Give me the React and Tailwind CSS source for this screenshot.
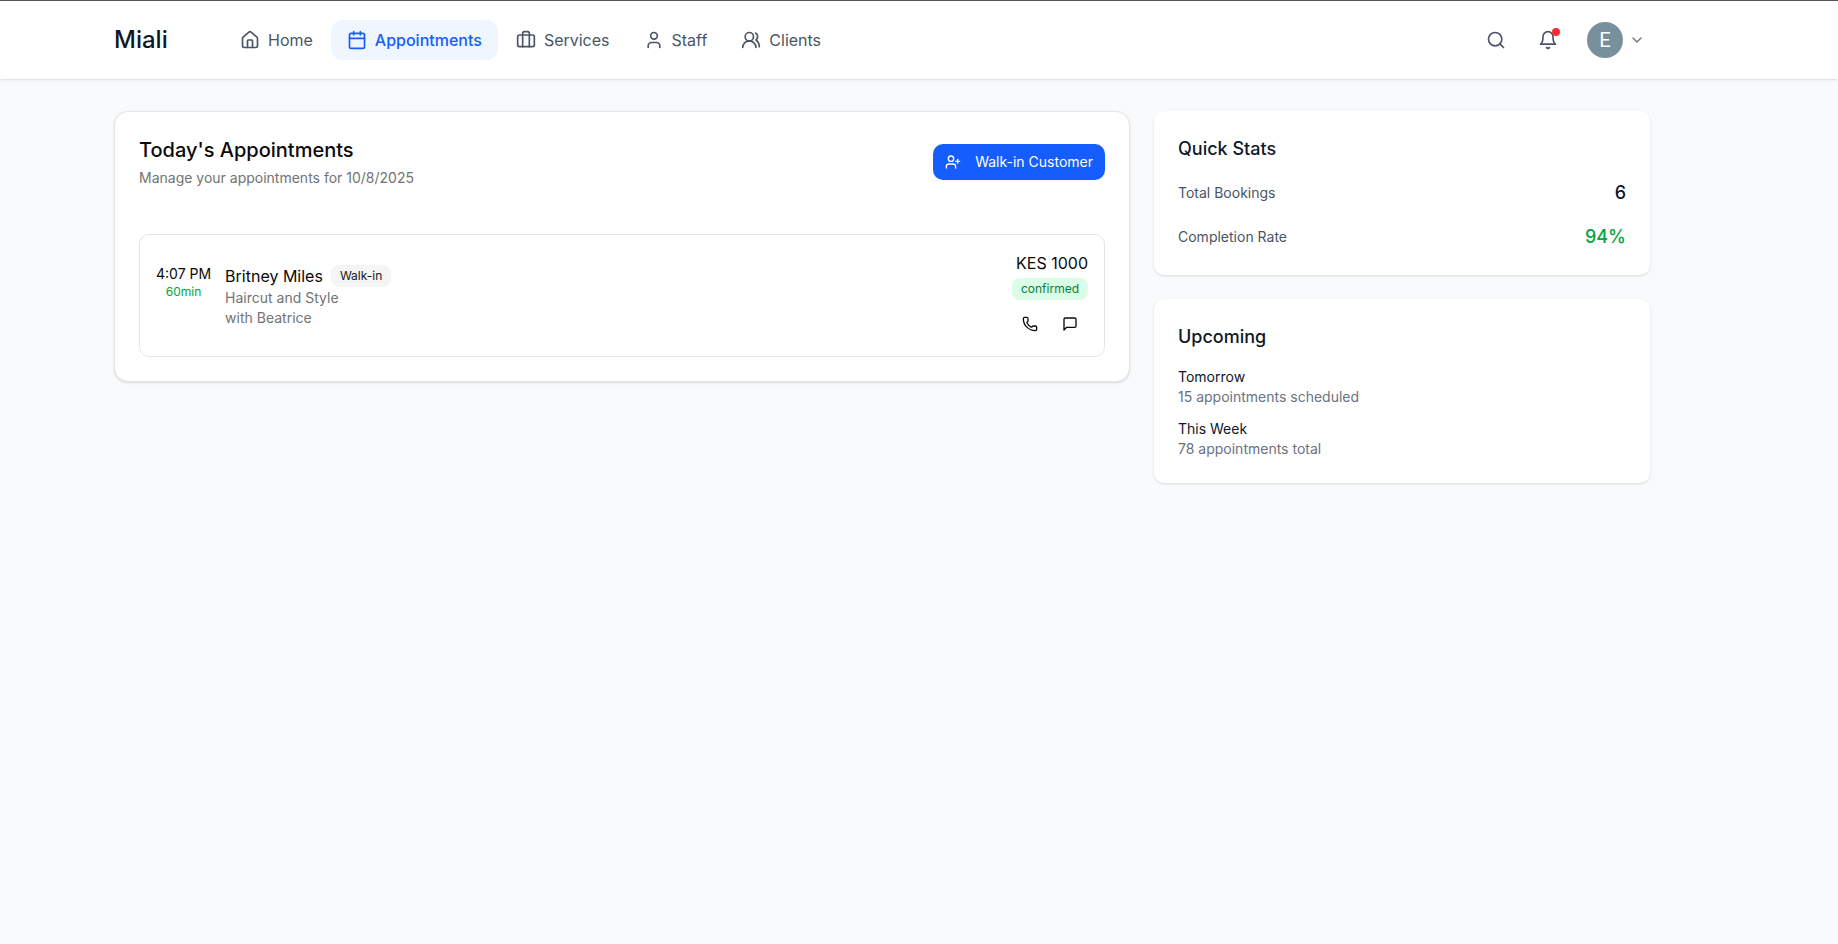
import React from 'react';
import {
    Briefcase,
    Calendar,
    ChevronDown,
    House,
    Phone,
    Search,
    User,
    UserPlus,
    UsersRound,
} from 'lucide-react';

const BellIcon = ({ className }) => (
    <svg className={className} viewBox="0 0 24 24" fill="none" stroke="currentColor" strokeWidth="2" strokeLinecap="round" strokeLinejoin="round">
        <path d="M6 8a6 6 0 0 1 12 0c0 7 3 9 3 9H3s3-2 3-9" />
        <path d="M10.3 21a1.94 1.94 0 0 0 3.4 0" />
    </svg>
);

const MessageIcon = ({ className }) => (
    <svg className={className} viewBox="0 0 24 24" fill="none" stroke="currentColor" strokeWidth="2" strokeLinecap="round" strokeLinejoin="round">
        <path d="M21 15a2 2 0 0 1-2 2H7l-4 4V5a2 2 0 0 1 2-2h14a2 2 0 0 1 2 2z" />
    </svg>
);

const navItems = [
    { label: 'Home', icon: House },
    { label: 'Appointments', icon: Calendar, active: true },
    { label: 'Services', icon: Briefcase },
    { label: 'Staff', icon: User },
    { label: 'Clients', icon: UsersRound },
];

const Header = () => {
    return (
        <header className="bg-white border-t border-[#555555] shadow-sm">
            <div className="flex items-center h-[78px] max-w-[1650px] pl-[114px]">
                <a href="#" className="text-2xl font-medium text-gray-900 w-[110px]">Miali</a>
                <nav className="flex items-center gap-0.5">
                    {navItems.map(({ label, icon: Icon, active }) => (
                        <a
                            key={label}
                            href="#"
                            className={`flex items-center gap-2 px-4 py-2 rounded-xl ${active ? 'bg-blue-50 text-blue-600 font-medium' : 'text-gray-600 hover:text-gray-900'}`}
                        >
                            <Icon className="w-5 h-5" />
                            <span>{label}</span>
                        </a>
                    ))}
                </nav>
                <div className="flex items-center gap-4 ml-auto">
                    <button aria-label="Search" className="p-2 text-gray-600">
                        <Search className="w-5 h-5" />
                    </button>
                    <button aria-label="Notifications" className="relative p-2 text-gray-600">
                        <BellIcon className="w-5 h-5" />
                        <span className="absolute top-1.5 right-1.5 w-2 h-2 bg-[#fb2c36] rounded-full"></span>
                    </button>
                    <button aria-label="Account" className="flex items-center gap-1.5 px-[5px] py-1">
                        <span className="flex items-center justify-center w-9 h-9 rounded-full bg-[#78909c] text-white text-xl font-['Roboto',sans-serif]">E</span>
                        <ChevronDown className="w-4 h-4 text-gray-500" />
                    </button>
                </div>
            </div>
        </header>
    );
};

const AppointmentRow = ({ time, duration, name, service, staff, price, status }) => {
    return (
        <div className="flex items-center justify-between p-4 border border-neutral-200 rounded-[10px]">
            <div className="flex items-start gap-[14px]">
                <div className="text-center">
                    <p className="text-sm">{time}</p>
                    <p className="text-xs text-[#00a63e]">{duration}</p>
                </div>
                <div>
                    <div className="flex items-center gap-2">
                        <h3>{name}</h3>
                        <span className="px-2 py-0.5 border border-transparent rounded-lg bg-neutral-100 text-xs text-neutral-900">Walk-in</span>
                    </div>
                    <p className="text-sm text-neutral-500">{service}</p>
                    <p className="text-sm text-neutral-500">with {staff}</p>
                </div>
            </div>
            <div className="flex flex-col items-end">
                <p>{price}</p>
                <span className="mt-[3px] px-2 py-0.5 border border-transparent rounded-lg bg-green-100 text-xs text-green-700">{status}</span>
                <div className="flex gap-1 mt-2">
                    <button aria-label="Call" className="flex items-center justify-center w-9 h-8">
                        <Phone className="w-4 h-4" />
                    </button>
                    <button aria-label="Message" className="flex items-center justify-center w-9 h-8">
                        <MessageIcon className="w-4 h-4" />
                    </button>
                </div>
            </div>
        </div>
    );
};

const TodaysAppointments = () => {
    return (
        <section className="col-span-2 self-start bg-white border border-neutral-200 rounded-[14px] shadow-sm p-6">
            <div className="flex items-center justify-between mb-[46px]">
                <div>
                    <h2 className="text-xl font-medium">Today's Appointments</h2>
                    <p className="mt-1 text-sm text-neutral-500">Manage your appointments for 10/8/2025</p>
                </div>
                <button className="flex items-center gap-[14px] h-9 px-3 rounded-[10px] bg-blue-600 text-white text-sm">
                    <UserPlus className="w-4 h-4" />
                    Walk-in Customer
                </button>
            </div>
            <AppointmentRow
                time="4:07 PM"
                duration="60min"
                name="Britney Miles"
                service="Haircut and Style"
                staff="Beatrice"
                price="KES 1000"
                status="confirmed"
            />
        </section>
    );
};

const Sidebar = () => {
    return (
        <aside className="space-y-6">
            <section className="bg-white rounded-[10px] shadow-sm p-6">
                <h2 className="text-lg font-medium text-gray-900 mb-4">Quick Stats</h2>
                <div className="space-y-4">
                    <div className="flex items-center justify-between">
                        <span className="text-sm text-gray-600">Total Bookings</span>
                        <span className="text-lg font-medium text-gray-900">6</span>
                    </div>
                    <div className="flex items-center justify-between">
                        <span className="text-sm text-gray-600">Completion Rate</span>
                        <span className="text-lg font-medium text-[#00a63e]">94%</span>
                    </div>
                </div>
            </section>
            <section className="bg-white rounded-[10px] shadow-sm p-6">
                <h2 className="text-lg font-medium text-gray-900 mb-4">Upcoming</h2>
                <div className="space-y-3 text-sm">
                    <div>
                        <p className="text-gray-900">Tomorrow</p>
                        <p className="text-gray-500">15 appointments scheduled</p>
                    </div>
                    <div>
                        <p className="text-gray-900">This Week</p>
                        <p className="text-gray-500">78 appointments total</p>
                    </div>
                </div>
            </section>
        </aside>
    );
};

const App = () => {
    return (
        <div className="min-h-screen bg-gray-50 text-neutral-950 font-['Inter',sans-serif]">
            <Header />
            <main className="grid grid-cols-3 gap-6 max-w-[1650px] pl-[114px] py-8">
                <TodaysAppointments />
                <Sidebar />
            </main>
        </div>
    );
};

export default App;
